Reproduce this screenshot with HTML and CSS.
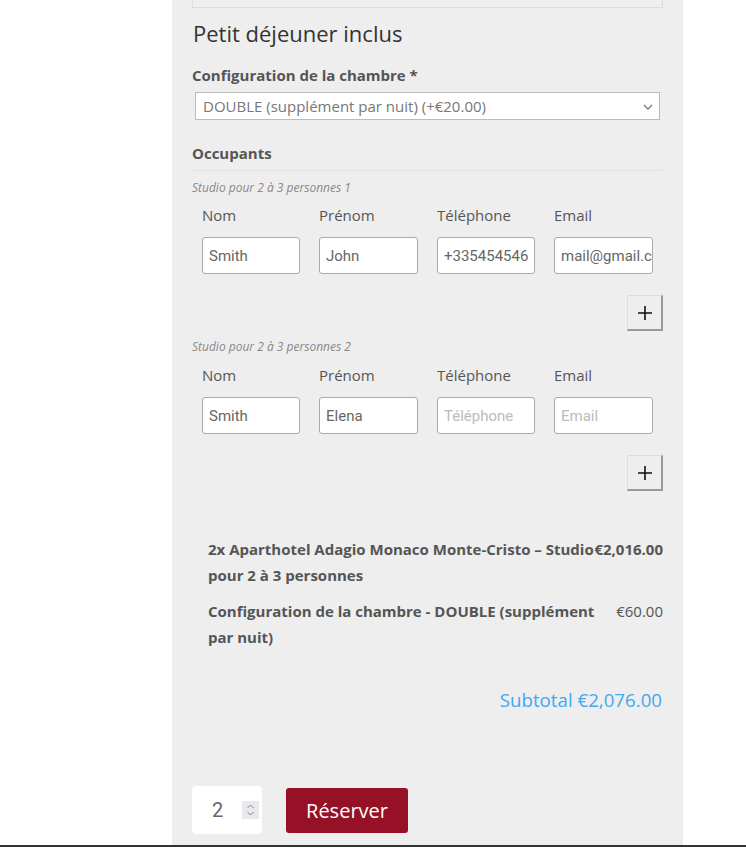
FILE: index.html
```html
<!DOCTYPE html>
<html lang="fr">
<head>
<meta charset="utf-8">
<title>Réservation</title>
<link rel="stylesheet" href="styles.css">
</head>
<body>
<div class="panel">
  <div class="topbox"></div>
  <h2 class="title">Petit déjeuner inclus</h2>
  <div class="field-label">Configuration de la chambre *</div>
  <div class="select">
    <span>DOUBLE (supplément par nuit) (+€20.00)</span>
    <svg class="chev" width="10" height="6" viewBox="0 0 10 6"><path d="M1 1 L5 5 L9 1" fill="none" stroke="#777" stroke-width="1.3"/></svg>
  </div>
  <div class="section-title">Occupants</div>

  <div class="room">
    <div class="room-name">Studio pour 2 à 3 personnes 1</div>
    <div class="grid">
      <div class="lbl">Nom</div><div class="lbl">Prénom</div><div class="lbl">Téléphone</div><div class="lbl">Email</div>
      <div class="inp">Smith</div><div class="inp">John</div><div class="inp">+335454546</div><div class="inp">mail@gmail.com</div>
    </div>
    <div class="add-row"><button class="plus"><svg width="14" height="14" viewBox="0 0 14 14"><path d="M7 0 V14 M0 7 H14" stroke="#111" stroke-width="1.6"/></svg></button></div>
  </div>

  <div class="room">
    <div class="room-name">Studio pour 2 à 3 personnes 2</div>
    <div class="grid">
      <div class="lbl">Nom</div><div class="lbl">Prénom</div><div class="lbl">Téléphone</div><div class="lbl">Email</div>
      <div class="inp">Smith</div><div class="inp">Elena</div><div class="inp ph">Téléphone</div><div class="inp ph">Email</div>
    </div>
    <div class="add-row"><button class="plus"><svg width="14" height="14" viewBox="0 0 14 14"><path d="M7 0 V14 M0 7 H14" stroke="#111" stroke-width="1.6"/></svg></button></div>
  </div>

  <div class="summary">
    <div class="item-name">2x Aparthotel Adagio Monaco Monte-Cristo – Studio pour 2 à 3 personnes</div>
    <div class="item-price bold">€2,016.00</div>
    <div class="item-name second">Configuration de la chambre - DOUBLE (supplément par nuit)</div>
    <div class="item-price second">€60.00</div>
  </div>
  <div class="subtotal">Subtotal €2,076.00</div>

  <div class="actions">
    <div class="qty">
      <span class="qty-val">2</span>
      <span class="spin"><svg width="9" height="14" viewBox="0 0 9 14"><path d="M1.5 5 L4.5 2 L7.5 5 M1.5 9 L4.5 12 L7.5 9" fill="none" stroke="#888" stroke-width="1"/></svg></span>
    </div>
    <button class="book">Réserver</button>
  </div>
</div>
<div class="footer">Adresse email :</div>
</body>
</html>
```
FILE: styles.css
```css
html, body {
  margin: 0;
  padding: 0;
  background: #fff;
}
body {
  font-family: "Open Sans", "Liberation Sans", sans-serif;
  color: #555;
}
.panel {
  margin-left: 172px;
  width: 511px;
  box-sizing: border-box;
  background: #eee;
  padding: 0 20px 11px;
}
.topbox {
  height: 7px;
  border: 1px solid #dcdcdc;
  border-top: none;
}
.title {
  margin: 10px 0 0 1px;
  font-size: 22px;
  line-height: 30px;
  font-weight: 400;
  color: #333;
}
.field-label {
  margin-top: 17px;
  font-size: 15px;
  line-height: 20px;
  font-weight: 700;
  color: #555;
}
.select {
  margin: 7px 3px 0 3px;
  height: 28px;
  box-sizing: border-box;
  border: 1px solid #bbb;
  background: #fff;
  display: flex;
  align-items: center;
  justify-content: space-between;
  padding: 0 6px 0 7px;
  font-size: 15px;
  color: #777;
}
.chev { margin-top: 1px; }
.section-title {
  margin-top: 23px;
  font-size: 15px;
  line-height: 20px;
  font-weight: 700;
  color: #555;
  padding-bottom: 7px;
  border-bottom: 1px solid #e2e2e2;
}
.room-name {
  margin-top: 8px;
  font-size: 12px;
  line-height: 17px;
  font-style: italic;
  color: #888;
}
.room + .room .room-name { margin-top: 7px; }
.grid {
  display: grid;
  grid-template-columns: 98px 99px 98px 99px;
  column-gap: 19px;
  row-gap: 12px;
  margin: 9px 0 0 10px;
}
.room + .room .grid { margin-top: 10px; }
.lbl {
  font-size: 15px;
  line-height: 20px;
  color: #555;
}
.inp {
  height: 37px;
  box-sizing: border-box;
  border: 1px solid #aaa;
  border-radius: 3px;
  background: #fff;
  font-family: Roboto, "Liberation Sans", sans-serif;
  font-size: 15px;
  color: #666;
  padding: 0 6px;
  display: flex;
  align-items: center;
  overflow: hidden;
  white-space: nowrap;
}
.inp.ph { color: #bbb; }
.add-row {
  display: flex;
  justify-content: flex-end;
  margin-top: 21px;
}
.plus {
  width: 36px;
  height: 36px;
  padding: 0;
  margin: 0;
  background: #eee;
  border-style: solid;
  border-width: 1px 2px 2px 1px;
  border-color: #ddd #999 #999 #ddd;
  display: flex;
  align-items: center;
  justify-content: center;
}
.summary {
  margin: 45px 0 0 16px;
  display: grid;
  grid-template-columns: 1fr auto;
  font-size: 15px;
  line-height: 26px;
  color: #555;
}
.item-name { font-weight: 700; }
.item-price { text-align: right; }
.item-price.bold { font-weight: 700; }
.second { margin-top: 10px; }
.subtotal {
  margin-top: 37px;
  text-align: right;
  font-size: 18.7px;
  line-height: 26px;
  color: #3fa9f0;
  padding-right: 1px;
}
.actions {
  margin-top: 73px;
  display: flex;
  align-items: center;
  gap: 24px;
}
.qty {
  width: 70px;
  height: 48px;
  background: #fff;
  border-radius: 4px;
  display: flex;
  align-items: center;
  box-sizing: border-box;
  padding-left: 20px;
}
.qty-val {
  font-family: Roboto, "Liberation Sans", sans-serif;
  font-size: 20px;
  color: #666;
  width: 30px;
}
.spin {
  width: 17px;
  height: 18px;
  background: #e8e8ee;
  display: flex;
  align-items: center;
  justify-content: center;
}
.book {
  width: 122px;
  height: 45px;
  background: #961125;
  border: none;
  border-radius: 3px;
  color: #fff;
  font-family: "Open Sans", "Liberation Sans", sans-serif;
  font-size: 20px;
  padding: 0;
}
.footer {
  border-top: 2px solid #333;
  font-family: "Liberation Serif", serif;
  font-size: 14px;
  color: #333;
  padding-top: 2px;
}
```
